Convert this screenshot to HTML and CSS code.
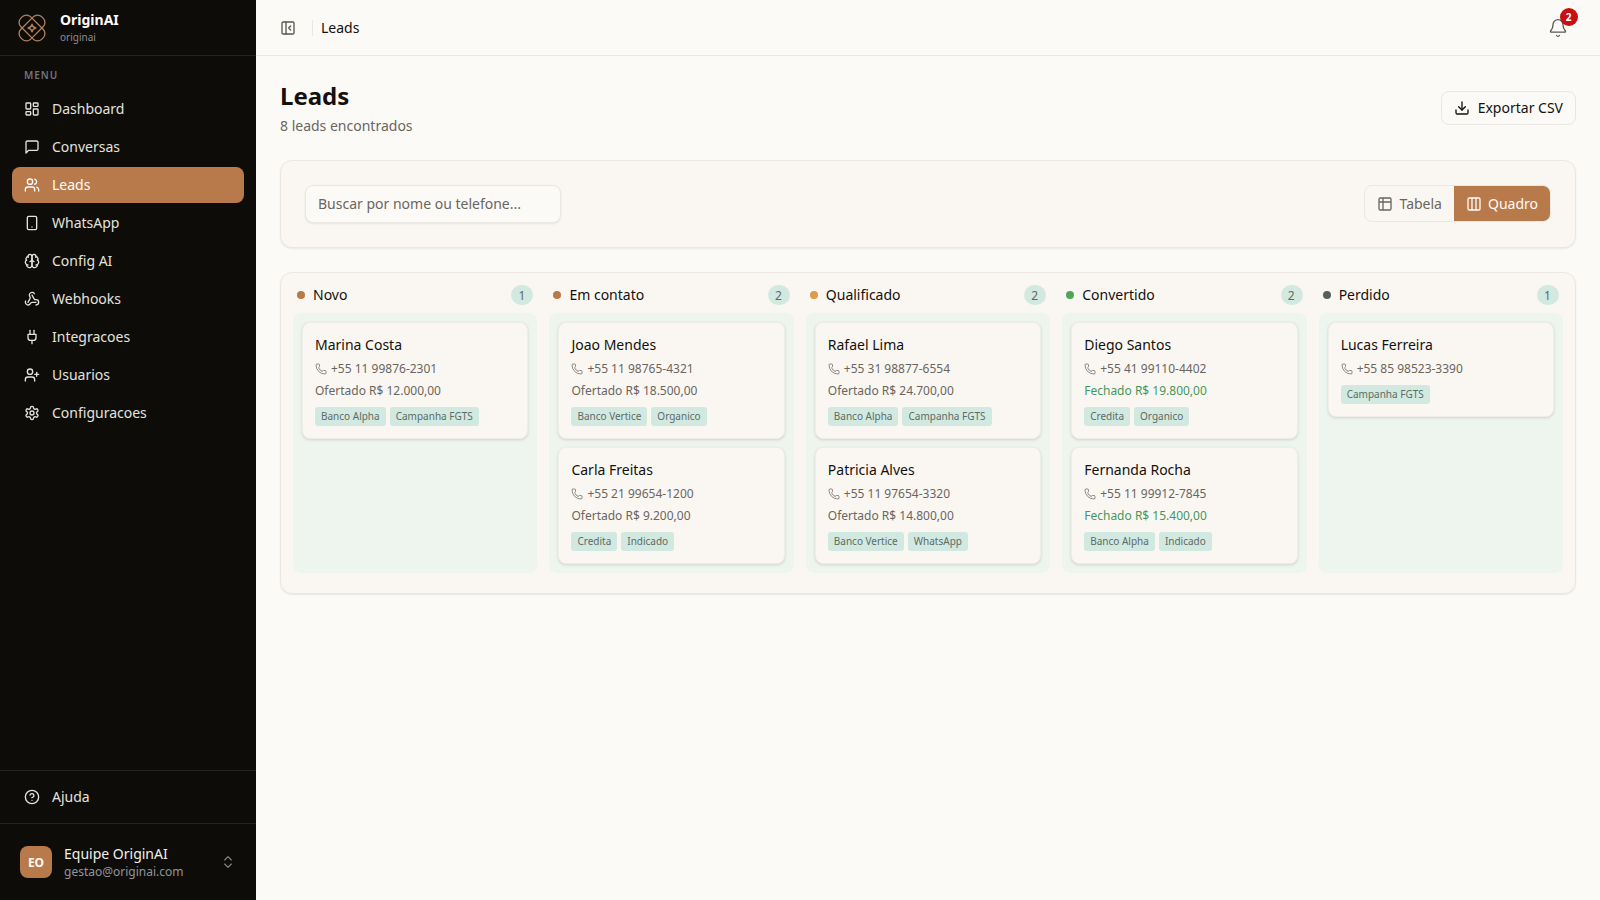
FILE: index.html
```html
<!DOCTYPE html>
<html lang="pt-BR">
<head>
<meta charset="utf-8">
<title>Leads - OriginAI</title>
<link rel="stylesheet" href="styles.css">
</head>
<body>
<svg class="sprite" xmlns="http://www.w3.org/2000/svg">
  <symbol id="i-phone" viewBox="0 0 24 24"><path d="M13.832 16.568a1 1 0 0 0 1.213-.303l.355-.465A2 2 0 0 1 17 15h3a2 2 0 0 1 2 2v3a2 2 0 0 1-2 2A18 18 0 0 1 2 4a2 2 0 0 1 2-2h3a2 2 0 0 1 2 2v3a2 2 0 0 1-.8 1.6l-.468.351a1 1 0 0 0-.292 1.233 14 14 0 0 0 6.392 6.384"/></symbol>
</svg>
<div class="app">
  <aside class="sidebar">
    <div class="brand">
      <svg class="logo" viewBox="0 0 32 32">
        <rect x="-1" y="8" width="34" height="16" rx="7" transform="rotate(45 16 16)"/>
        <rect x="-1" y="8" width="34" height="16" rx="7" transform="rotate(-45 16 16)"/>
        <path d="M16 11.500c.5 2.700 1.800 4 4.500 4.500-2.700.5-4 1.800-4.500 4.500-.5-2.700-1.800-4-4.500-4.500 2.700-.5 4-1.800 4.500-4.500z"/>
      </svg>
      <div class="brand-text">
        <div class="brand-name">OriginAI</div>
        <div class="brand-sub">originai</div>
      </div>
    </div>
    <nav class="nav">
      <div class="nav-label">MENU</div>
      <a class="nav-item"><svg class="nav-icon" viewBox="0 0 24 24"><rect x="3" y="3" width="7" height="9" rx="1"/><rect x="14" y="3" width="7" height="5" rx="1"/><rect x="14" y="12" width="7" height="9" rx="1"/><rect x="3" y="16" width="7" height="5" rx="1"/></svg>Dashboard</a>
      <a class="nav-item"><svg class="nav-icon" viewBox="0 0 24 24"><path d="M21 15a2 2 0 0 1-2 2H7l-4 4V5a2 2 0 0 1 2-2h14a2 2 0 0 1 2 2z"/></svg>Conversas</a>
      <a class="nav-item active"><svg class="nav-icon" viewBox="0 0 24 24"><path d="M16 21v-2a4 4 0 0 0-4-4H6a4 4 0 0 0-4 4v2"/><circle cx="9" cy="7" r="4"/><path d="M22 21v-2a4 4 0 0 0-3-3.870"/><path d="M16 3.130a4 4 0 0 1 0 7.750"/></svg>Leads</a>
      <a class="nav-item"><svg class="nav-icon" viewBox="0 0 24 24"><rect x="5" y="2" width="14" height="20" rx="2"/><path d="M12 18h.01"/></svg>WhatsApp</a>
      <a class="nav-item"><svg class="nav-icon" viewBox="0 0 24 24"><path d="M12 5a3 3 0 1 0-5.997.125 4 4 0 0 0-2.526 5.770 4 4 0 0 0 .556 6.588A4 4 0 1 0 12 18Z"/><path d="M12 5a3 3 0 1 1 5.997.125 4 4 0 0 1 2.526 5.770 4 4 0 0 1-.556 6.588A4 4 0 1 1 12 18Z"/><path d="M15 13a4.500 4.500 0 0 1-3-4 4.500 4.500 0 0 1-3 4"/><path d="M17.599 6.500a3 3 0 0 0 .399-1.375"/><path d="M6.003 5.125A3 3 0 0 0 6.401 6.500"/><path d="M3.477 10.896a4 4 0 0 1 .585-.396"/><path d="M19.938 10.500a4 4 0 0 1 .585.396"/><path d="M6 18a4 4 0 0 1-1.967-.516"/><path d="M19.967 17.484A4 4 0 0 1 18 18"/></svg>Config AI</a>
      <a class="nav-item"><svg class="nav-icon" viewBox="0 0 24 24"><path d="M18 16.980h-5.990c-1.100 0-1.950.940-2.480 1.900A4 4 0 0 1 2 17c.010-.700.200-1.400.570-2"/><path d="m6 17 3.130-5.780c.530-.970.100-2.180-.500-3.100a4 4 0 1 1 6.890-4.060"/><path d="m12 6 3.130 5.730C15.660 12.700 16.900 13 18 13a4 4 0 0 1 0 8"/></svg>Webhooks</a>
      <a class="nav-item"><svg class="nav-icon" viewBox="0 0 24 24"><path d="M12 22v-5"/><path d="M9 8V2"/><path d="M15 8V2"/><path d="M18 8v5a4 4 0 0 1-4 4h-4a4 4 0 0 1-4-4V8Z"/></svg>Integracoes</a>
      <a class="nav-item"><svg class="nav-icon" viewBox="0 0 24 24"><path d="M16 21v-2a4 4 0 0 0-4-4H6a4 4 0 0 0-4 4v2"/><circle cx="9" cy="7" r="4"/><line x1="19" x2="19" y1="8" y2="14"/><line x1="22" x2="16" y1="11" y2="11"/></svg>Usuarios</a>
      <a class="nav-item"><svg class="nav-icon" viewBox="0 0 24 24"><path d="M12.220 2h-.440a2 2 0 0 0-2 2v.180a2 2 0 0 1-1 1.730l-.430.250a2 2 0 0 1-2 0l-.150-.080a2 2 0 0 0-2.730.730l-.220.380a2 2 0 0 0 .730 2.730l.150.100a2 2 0 0 1 1 1.720v.510a2 2 0 0 1-1 1.740l-.150.090a2 2 0 0 0-.730 2.730l.220.380a2 2 0 0 0 2.730.730l.150-.080a2 2 0 0 1 2 0l.430.250a2 2 0 0 1 1 1.730V20a2 2 0 0 0 2 2h.440a2 2 0 0 0 2-2v-.180a2 2 0 0 1 1-1.730l.430-.250a2 2 0 0 1 2 0l.150.080a2 2 0 0 0 2.730-.730l.220-.390a2 2 0 0 0-.730-2.730l-.150-.080a2 2 0 0 1-1-1.740v-.500a2 2 0 0 1 1-1.740l.150-.090a2 2 0 0 0 .730-2.730l-.220-.380a2 2 0 0 0-2.730-.730l-.150.080a2 2 0 0 1-2 0l-.430-.250a2 2 0 0 1-1-1.730V4a2 2 0 0 0-2-2z"/><circle cx="12" cy="12" r="3"/></svg>Configuracoes</a>
    </nav>
    <div class="help">
      <a class="nav-item"><svg class="nav-icon" viewBox="0 0 24 24"><circle cx="12" cy="12" r="10"/><path d="M9.090 9a3 3 0 0 1 5.830 1c0 2-3 3-3 3"/><path d="M12 17h.01"/></svg>Ajuda</a>
    </div>
    <div class="user">
      <div class="avatar">EO</div>
      <div class="user-text">
        <div class="user-name">Equipe OriginAI</div>
        <div class="user-mail">gestao@originai.com</div>
      </div>
      <svg class="chevrons" viewBox="0 0 24 24"><path d="m7 15 5 5 5-5"/><path d="m7 9 5-5 5 5"/></svg>
    </div>
  </aside>
  <div class="main">
    <header class="topbar">
      <svg class="collapse" viewBox="0 0 24 24"><rect x="3" y="3" width="18" height="18" rx="2"/><path d="M9 3v18"/><path d="m16 15-3-3 3-3"/></svg>
      <span class="top-sep"></span>
      <span class="crumb">Leads</span>
      <div class="bell">
        <svg viewBox="0 0 24 24"><path d="M10.268 21a2 2 0 0 0 3.464 0"/><path d="M3.262 15.326A1 1 0 0 0 4 17h16a1 1 0 0 0 .74-1.673C19.410 13.956 18 12.499 18 8A6 6 0 0 0 6 8c0 4.499-1.411 5.956-2.738 7.326"/></svg>
        <span class="bell-count">2</span>
      </div>
    </header>
    <main class="content">
      <div class="page-head">
        <div>
          <h1 class="title">Leads</h1>
          <p class="subtitle">8 leads encontrados</p>
        </div>
        <button class="export"><svg viewBox="0 0 24 24"><path d="M12 15V3"/><path d="M21 15v4a2 2 0 0 1-2 2H5a2 2 0 0 1-2-2v-4"/><path d="m7 10 5 5 5-5"/></svg>Exportar CSV</button>
      </div>
      <section class="panel toolbar">
        <div class="search">Buscar por nome ou telefone...</div>
        <div class="toggle">
          <div class="toggle-btn"><svg viewBox="0 0 24 24"><path d="M9 3H5a2 2 0 0 0-2 2v4m6-6h10a2 2 0 0 1 2 2v4M9 3v18m0 0h10a2 2 0 0 0 2-2V9M9 21H5a2 2 0 0 1-2-2V9m0 0h18"/></svg>Tabela</div>
          <div class="toggle-btn on"><svg viewBox="0 0 24 24"><rect x="3" y="3" width="18" height="18" rx="2"/><path d="M9 3v18"/><path d="M15 3v18"/></svg>Quadro</div>
        </div>
      </section>
      <section class="panel board">
        <div class="column">
          <div class="col-head"><span class="dot dot-a"></span><span class="col-name">Novo</span><span class="count">1</span></div>
          <div class="col-body">
            <article class="card"><div class="name">Marina Costa</div><div class="phone"><svg><use href="#i-phone"/></svg>+55 11 99876-2301</div><div class="offer">Ofertado R$ 12.000,00</div><div class="tags"><span class="tag">Banco Alpha</span><span class="tag">Campanha FGTS</span></div></article>
          </div>
        </div>
        <div class="column">
          <div class="col-head"><span class="dot dot-a"></span><span class="col-name">Em contato</span><span class="count">2</span></div>
          <div class="col-body">
            <article class="card"><div class="name">Joao Mendes</div><div class="phone"><svg><use href="#i-phone"/></svg>+55 11 98765-4321</div><div class="offer">Ofertado R$ 18.500,00</div><div class="tags"><span class="tag">Banco Vertice</span><span class="tag">Organico</span></div></article>
            <article class="card"><div class="name">Carla Freitas</div><div class="phone"><svg><use href="#i-phone"/></svg>+55 21 99654-1200</div><div class="offer">Ofertado R$ 9.200,00</div><div class="tags"><span class="tag">Credita</span><span class="tag">Indicado</span></div></article>
          </div>
        </div>
        <div class="column">
          <div class="col-head"><span class="dot dot-b"></span><span class="col-name">Qualificado</span><span class="count">2</span></div>
          <div class="col-body">
            <article class="card"><div class="name">Rafael Lima</div><div class="phone"><svg><use href="#i-phone"/></svg>+55 31 98877-6554</div><div class="offer">Ofertado R$ 24.700,00</div><div class="tags"><span class="tag">Banco Alpha</span><span class="tag">Campanha FGTS</span></div></article>
            <article class="card"><div class="name">Patricia Alves</div><div class="phone"><svg><use href="#i-phone"/></svg>+55 11 97654-3320</div><div class="offer">Ofertado R$ 14.800,00</div><div class="tags"><span class="tag">Banco Vertice</span><span class="tag">WhatsApp</span></div></article>
          </div>
        </div>
        <div class="column">
          <div class="col-head"><span class="dot dot-c"></span><span class="col-name">Convertido</span><span class="count">2</span></div>
          <div class="col-body">
            <article class="card"><div class="name">Diego Santos</div><div class="phone"><svg><use href="#i-phone"/></svg>+55 41 99110-4402</div><div class="offer won">Fechado R$ 19.800,00</div><div class="tags"><span class="tag">Credita</span><span class="tag">Organico</span></div></article>
            <article class="card"><div class="name">Fernanda Rocha</div><div class="phone"><svg><use href="#i-phone"/></svg>+55 11 99912-7845</div><div class="offer won">Fechado R$ 15.400,00</div><div class="tags"><span class="tag">Banco Alpha</span><span class="tag">Indicado</span></div></article>
          </div>
        </div>
        <div class="column">
          <div class="col-head"><span class="dot dot-d"></span><span class="col-name">Perdido</span><span class="count">1</span></div>
          <div class="col-body">
            <article class="card"><div class="name">Lucas Ferreira</div><div class="phone"><svg><use href="#i-phone"/></svg>+55 85 98523-3390</div><div class="tags"><span class="tag">Campanha FGTS</span></div></article>
          </div>
        </div>
      </section>
    </main>
  </div>
</div>
</body>
</html>
```
FILE: styles.css
```css
* { box-sizing: border-box; }
html, body { margin: 0; height: 100%; }
body { font-family: "Noto Sans", sans-serif; background: #fcfaf7; color: #14110d; font-size: 14px; overflow: hidden; }
.sprite { display: none; }
svg { fill: none; stroke: currentColor; stroke-width: 2; stroke-linecap: round; stroke-linejoin: round; flex: none; }
.app { display: flex; height: 900px; }

.sidebar { width: 256px; flex: none; background: #0e0c09; color: #e4e2de; display: flex; flex-direction: column; }
.brand { height: 56px; display: flex; align-items: center; gap: 14px; padding: 0 16px 0 18px; border-bottom: 1px solid #25231f; }
.logo { width: 28px; height: 28px; stroke-width: 1.500; color: #b0805d; }
.brand-name { font-size: 14px; font-weight: 700; line-height: 20px; color: #fcfaf7; margin-top: -2px; }
.brand-sub { font-size: 10px; line-height: 14px; color: #8b8b90; }
.nav { flex: 1; padding: 12px; display: flex; flex-direction: column; gap: 2px; }
.nav-label { font-size: 10px; font-weight: 600; letter-spacing: 1px; line-height: 14px; color: #74747a; padding: 0 12px; margin-bottom: 7px; }
.nav-item { display: flex; align-items: center; gap: 12px; height: 36px; padding: 0 12px 2px; border-radius: 8px; font-size: 14px; color: #e4e2de; }
.nav-icon { width: 16px; height: 16px; margin-top: 2px; }
.nav-item.active { background: #b87a4b; color: #fcfaf7; }
.help { padding: 8px 12px; border-top: 1px solid #25231f; height: 53px; }
.user { height: 77px; border-top: 1px solid #25231f; display: flex; align-items: center; padding: 0 20px; gap: 12px; }
.avatar { width: 32px; height: 32px; border-radius: 8px; background: #b87a4b; color: #fcfaf7; font-size: 12px; font-weight: 700; display: flex; align-items: center; justify-content: center; }
.user-text { flex: 1; }
.user-name { font-size: 14px; line-height: 18px; color: #f2eee8; }
.user-mail { font-size: 12px; line-height: 16px; margin-top: 1px; color: #92949b; }
.chevrons { width: 16px; height: 16px; color: #8f8d89; stroke-width: 1.600; }

.main { flex: 1; min-width: 0; display: flex; flex-direction: column; }
.topbar { height: 56px; flex: none; display: flex; align-items: center; padding: 0 24px; border-bottom: 1px solid #eae7e2; }
.collapse { width: 16px; height: 16px; color: #5a5650; }
.top-sep { width: 1px; height: 16px; background: #eae7e2; margin: 0 8px 0 16px; }
.crumb { font-size: 14px; }
.bell { margin-left: auto; position: relative; width: 36px; height: 36px; display: flex; align-items: center; justify-content: center; color: #5a5650; }
.bell svg { width: 20px; height: 20px; stroke-width: 1.600; }
.bell-count { position: absolute; top: -2px; right: -2px; width: 18px; height: 18px; border-radius: 50%; background: #c90f0f; color: #fff; font-size: 10px; font-weight: 700; display: flex; align-items: center; justify-content: center; padding-right: 1px; }

.content { padding: 24px; display: flex; flex-direction: column; gap: 24px; }
.page-head { display: flex; justify-content: space-between; align-items: flex-start; height: 56px; }
.title { margin: 0; font-size: 24px; line-height: 32px; font-weight: 700; }
.subtitle { margin: 4px 0 0; font-size: 14px; line-height: 20px; color: #6a665e; }
.export { margin-top: 11px; height: 34px; display: flex; align-items: center; gap: 8px; padding: 0 12px 2px; background: #fcfaf7; border: 1px solid #eae7e2; border-radius: 8px; font: 400 14px "Noto Sans", sans-serif; color: #14110d; }
.export svg { width: 16px; height: 16px; margin-top: 2px; }

.panel { background: #faf7f3; border: 1px solid #eae7e2; border-radius: 12px; box-shadow: 0 1px 2px rgba(20, 17, 13, .07); }
.toolbar { height: 88px; display: flex; align-items: flex-start; justify-content: space-between; padding: 24px 24px 0; }
.search { width: 256px; height: 38px; display: flex; align-items: center; padding: 0 12px 2px; background: #fcfaf7; border: 1px solid #eae7e2; border-radius: 8px; box-shadow: 0 1px 2px rgba(20, 17, 13, .08); color: #6a665e; font-size: 14px; }
.toggle { display: flex; height: 37px; border: 1px solid #eae7e2; border-radius: 8px; overflow: hidden; }
.toggle-btn { display: flex; align-items: center; gap: 6px; padding: 0 12px; font-size: 14px; color: #6a665e; }
.toggle-btn svg { width: 16px; height: 16px; }
.toggle-btn.on { background: #b87a4b; color: #fcfaf7; }

.board { padding: 12px 12px 20px; display: flex; gap: 12px; }
.column { flex: 1 1 0; min-width: 0; display: flex; flex-direction: column; }
.col-head { height: 20px; display: flex; align-items: center; padding: 0 4px; margin-bottom: 8px; }
.dot { width: 8px; height: 8px; border-radius: 50%; margin-right: 8px; }
.dot-a { background: #b87a4b; }
.dot-b { background: #e09a4a; }
.dot-c { background: #4fa65b; }
.dot-d { background: #59605c; }
.col-name { font-size: 14px; flex: 1; padding-bottom: 2px; }
.count { width: 22px; height: 20px; border-radius: 10px; background: #d2e9e1; color: #5d6b64; font-size: 12px; display: flex; align-items: center; justify-content: center; padding-right: 1px; }
.col-body { flex: 1; background: #eef4ee; border-radius: 8px; padding: 9px 9px 9.500px; display: flex; flex-direction: column; gap: 8.500px; }
.card { background: #faf7f3; border: 1px solid #f0ede8; border-radius: 8px; padding: 12px 12px 11.500px; box-shadow: 0 1px 3px rgba(20, 17, 13, .14); }
.name { font-size: 14px; line-height: 20px; }
.phone { display: flex; align-items: center; gap: 4px; font-size: 12px; line-height: 16px; color: #6a665e; margin-top: 6px; }
.phone svg { width: 12px; height: 12px; stroke-width: 1.500; }
.offer { font-size: 12px; line-height: 16px; color: #6a665e; margin-top: 6px; }
.offer.won { color: #46985a; }
.tags { display: flex; gap: 4px; margin-top: 8px; }
.tag { font-size: 10px; line-height: 19px; padding: 0 6px; border-radius: 3px; background: #d2e9e1; color: #5d6b64; }
```
